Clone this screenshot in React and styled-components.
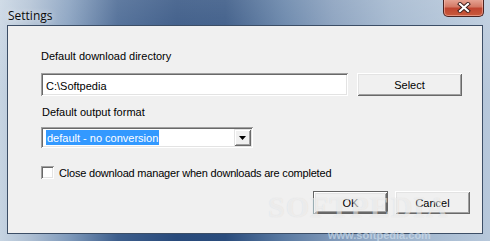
import React, { useState } from "react";
import styled, { createGlobalStyle } from "styled-components";

const GlobalStyle = createGlobalStyle`
  html, body {
    margin: 0;
    padding: 0;
    background: #ffffff;
  }
  * {
    box-sizing: border-box;
  }
`;

const Window = styled.div`
  position: relative;
  width: 490px;
  height: 241px;
  display: flex;
  flex-direction: column;
  overflow: hidden;
  font-family: "Liberation Sans", Arial, sans-serif;
  font-size: 11px;
  color: #000;
  background:
    linear-gradient(180deg, rgba(255, 255, 255, 0.18) 0%, rgba(255, 255, 255, 0) 40%),
    linear-gradient(
      90deg,
      #c6d4e2 0%,
      #aebfd3 6%,
      #7f9abb 14%,
      #3d5e8c 24%,
      #284a7b 36%,
      #2a4c7c 46%,
      #5a7aa2 58%,
      #7f98b8 68%,
      #9cb2cb 80%,
      #b7c8db 100%
    );
`;

const TitleBar = styled.div`
  height: 25px;
  display: flex;
  align-items: flex-start;
  justify-content: space-between;
  padding-left: 8px;
  padding-right: 6px;
`;

const Title = styled.span`
  margin-top: 7px;
  font-family: "Open Sans", "Noto Sans", sans-serif;
  font-size: 12px;
  color: #0b0b0b;
  text-shadow: 0 0 6px rgba(255, 255, 255, 0.8);
`;

const CloseButton = styled.button`
  width: 41px;
  height: 18px;
  margin-top: -1px;
  padding: 0;
  display: flex;
  align-items: center;
  justify-content: center;
  border: 1px solid #4b2321;
  border-top: none;
  border-radius: 0 0 5px 5px;
  background: linear-gradient(180deg, #e8a898 0%, #d47a66 45%, #c04530 55%, #c85a3c 100%);
  box-shadow: inset 0 0 0 1px rgba(255, 200, 190, 0.5);
  cursor: default;
`;

const Client = styled.div`
  flex: 1;
  margin: 0 7px 7px 7px;
  border: 1px solid #3c4e66;
  background: #f0f0f0;
  padding: 23px 12px 0 33px;
  display: flex;
  flex-direction: column;
`;

const Label = styled.div`
  height: 14px;
  line-height: 14px;
  margin-left: ${(p) => p.indent || 0}px;
  margin-bottom: ${(p) => p.gap || 0}px;
`;

const Row = styled.div`
  display: flex;
  align-items: center;
  gap: ${(p) => p.gap || 0}px;
  margin-top: ${(p) => p.before || 0}px;
  margin-bottom: ${(p) => p.after || 0}px;
`;

const CheckText = styled.span`
  letter-spacing: -0.2px;
`;

const sunken = `
  background: #ffffff;
  border: none;
  box-shadow:
    inset 1px 1px 0 #a0a0a0,
    inset -1px -1px 0 #ffffff,
    inset 2px 2px 0 #696969,
    inset -2px -2px 0 #e3e3e3;
`;

const TextBox = styled.input`
  ${sunken}
  width: 307px;
  height: 23px;
  padding: 2px 5px 0 5px;
  font: inherit;
  font-size: 11px;
  color: #000;
  outline: none;
`;

const Button = styled.button`
  width: ${(p) => p.w || 75}px;
  height: 23px;
  padding: 0;
  font: inherit;
  font-size: 11px;
  color: #000;
  background: #f0f0f0;
  border: ${(p) => (p.isDefault ? "1px solid #646464" : "none")};
  box-shadow:
    inset 1px 1px 0 #ffffff,
    inset -1px -1px 0 #696969,
    inset 2px 2px 0 #e3e3e3,
    inset -2px -2px 0 #a0a0a0;
  cursor: default;
`;

const Combo = styled.div`
  ${sunken}
  width: 212px;
  height: 21px;
  padding: 2px;
  display: flex;
  align-items: stretch;
  justify-content: space-between;
`;

const ComboValue = styled.span`
  margin: 1px 0 1px 3px;
  padding: 0 1px;
  display: flex;
  align-items: center;
  background: #3399ff;
  color: #ffffff;
`;

const ComboArrow = styled.span`
  width: 17px;
  display: flex;
  align-items: center;
  justify-content: center;
  background: #f0f0f0;
  box-shadow:
    inset 1px 1px 0 #e3e3e3,
    inset -1px -1px 0 #696969,
    inset 2px 2px 0 #ffffff,
    inset -2px -2px 0 #a0a0a0;
`;

const Check = styled.span`
  ${sunken}
  width: 13px;
  height: 13px;
  flex-shrink: 0;
`;

const Footer = styled.div`
  display: flex;
  justify-content: flex-end;
  gap: 7px;
  margin-top: 12px;
`;

const Watermark = styled.div`
  position: absolute;
  left: 268px;
  top: 191px;
  font-family: "Liberation Serif", serif;
  font-weight: bold;
  font-size: 30px;
  line-height: 32px;
  letter-spacing: 1px;
  color: rgba(255, 255, 255, 0.5);
  text-shadow: 0 0 1px rgba(120, 120, 120, 0.2);
  pointer-events: none;
`;

const WatermarkUrl = styled.div`
  position: absolute;
  left: 328px;
  top: 229px;
  font-family: "Liberation Sans", sans-serif;
  font-weight: bold;
  font-size: 11px;
  line-height: 12px;
  color: rgba(210, 225, 240, 0.65);
  pointer-events: none;
`;

const CloseGlyph = () => (
  <svg width="14" height="11" viewBox="0 0 14 11">
    <path d="M3 2 L11 9 M11 2 L3 9" stroke="#3a1c1a" strokeWidth="4" strokeLinecap="square" />
    <path d="M3 2 L11 9 M11 2 L3 9" stroke="#ffffff" strokeWidth="2.2" strokeLinecap="square" />
  </svg>
);

export default function App() {
  const [dir, setDir] = useState("C:\\Softpedia");

  return (
    <>
      <GlobalStyle />
      <Window>
        <TitleBar>
          <Title>Settings</Title>
          <CloseButton type="button">
            <CloseGlyph />
          </CloseButton>
        </TitleBar>
        <Client>
          <Label gap={10}>Default download directory</Label>
          <Row gap={9} after={9}>
            <TextBox value={dir} onChange={(e) => setDir(e.target.value)} />
            <Button type="button" w={105}>
              Select
            </Button>
          </Row>
          <Label indent={1} gap={8}>
            Default output format
          </Label>
          <Combo>
            <ComboValue>default - no conversion</ComboValue>
            <ComboArrow>
              <svg width="7" height="4" viewBox="0 0 7 4">
                <path d="M0 0 H7 L3.5 4 Z" fill="#000" />
              </svg>
            </ComboArrow>
          </Combo>
          <Row gap={5} before={18}>
            <Check />
            <CheckText>Close download manager when downloads are completed</CheckText>
          </Row>
          <Footer>
            <Button type="button" isDefault>
              OK
            </Button>
            <Button type="button">Cancel</Button>
          </Footer>
        </Client>
        <Watermark>SOFTPEDIA</Watermark>
        <WatermarkUrl>www.softpedia.com</WatermarkUrl>
      </Window>
    </>
  );
}
